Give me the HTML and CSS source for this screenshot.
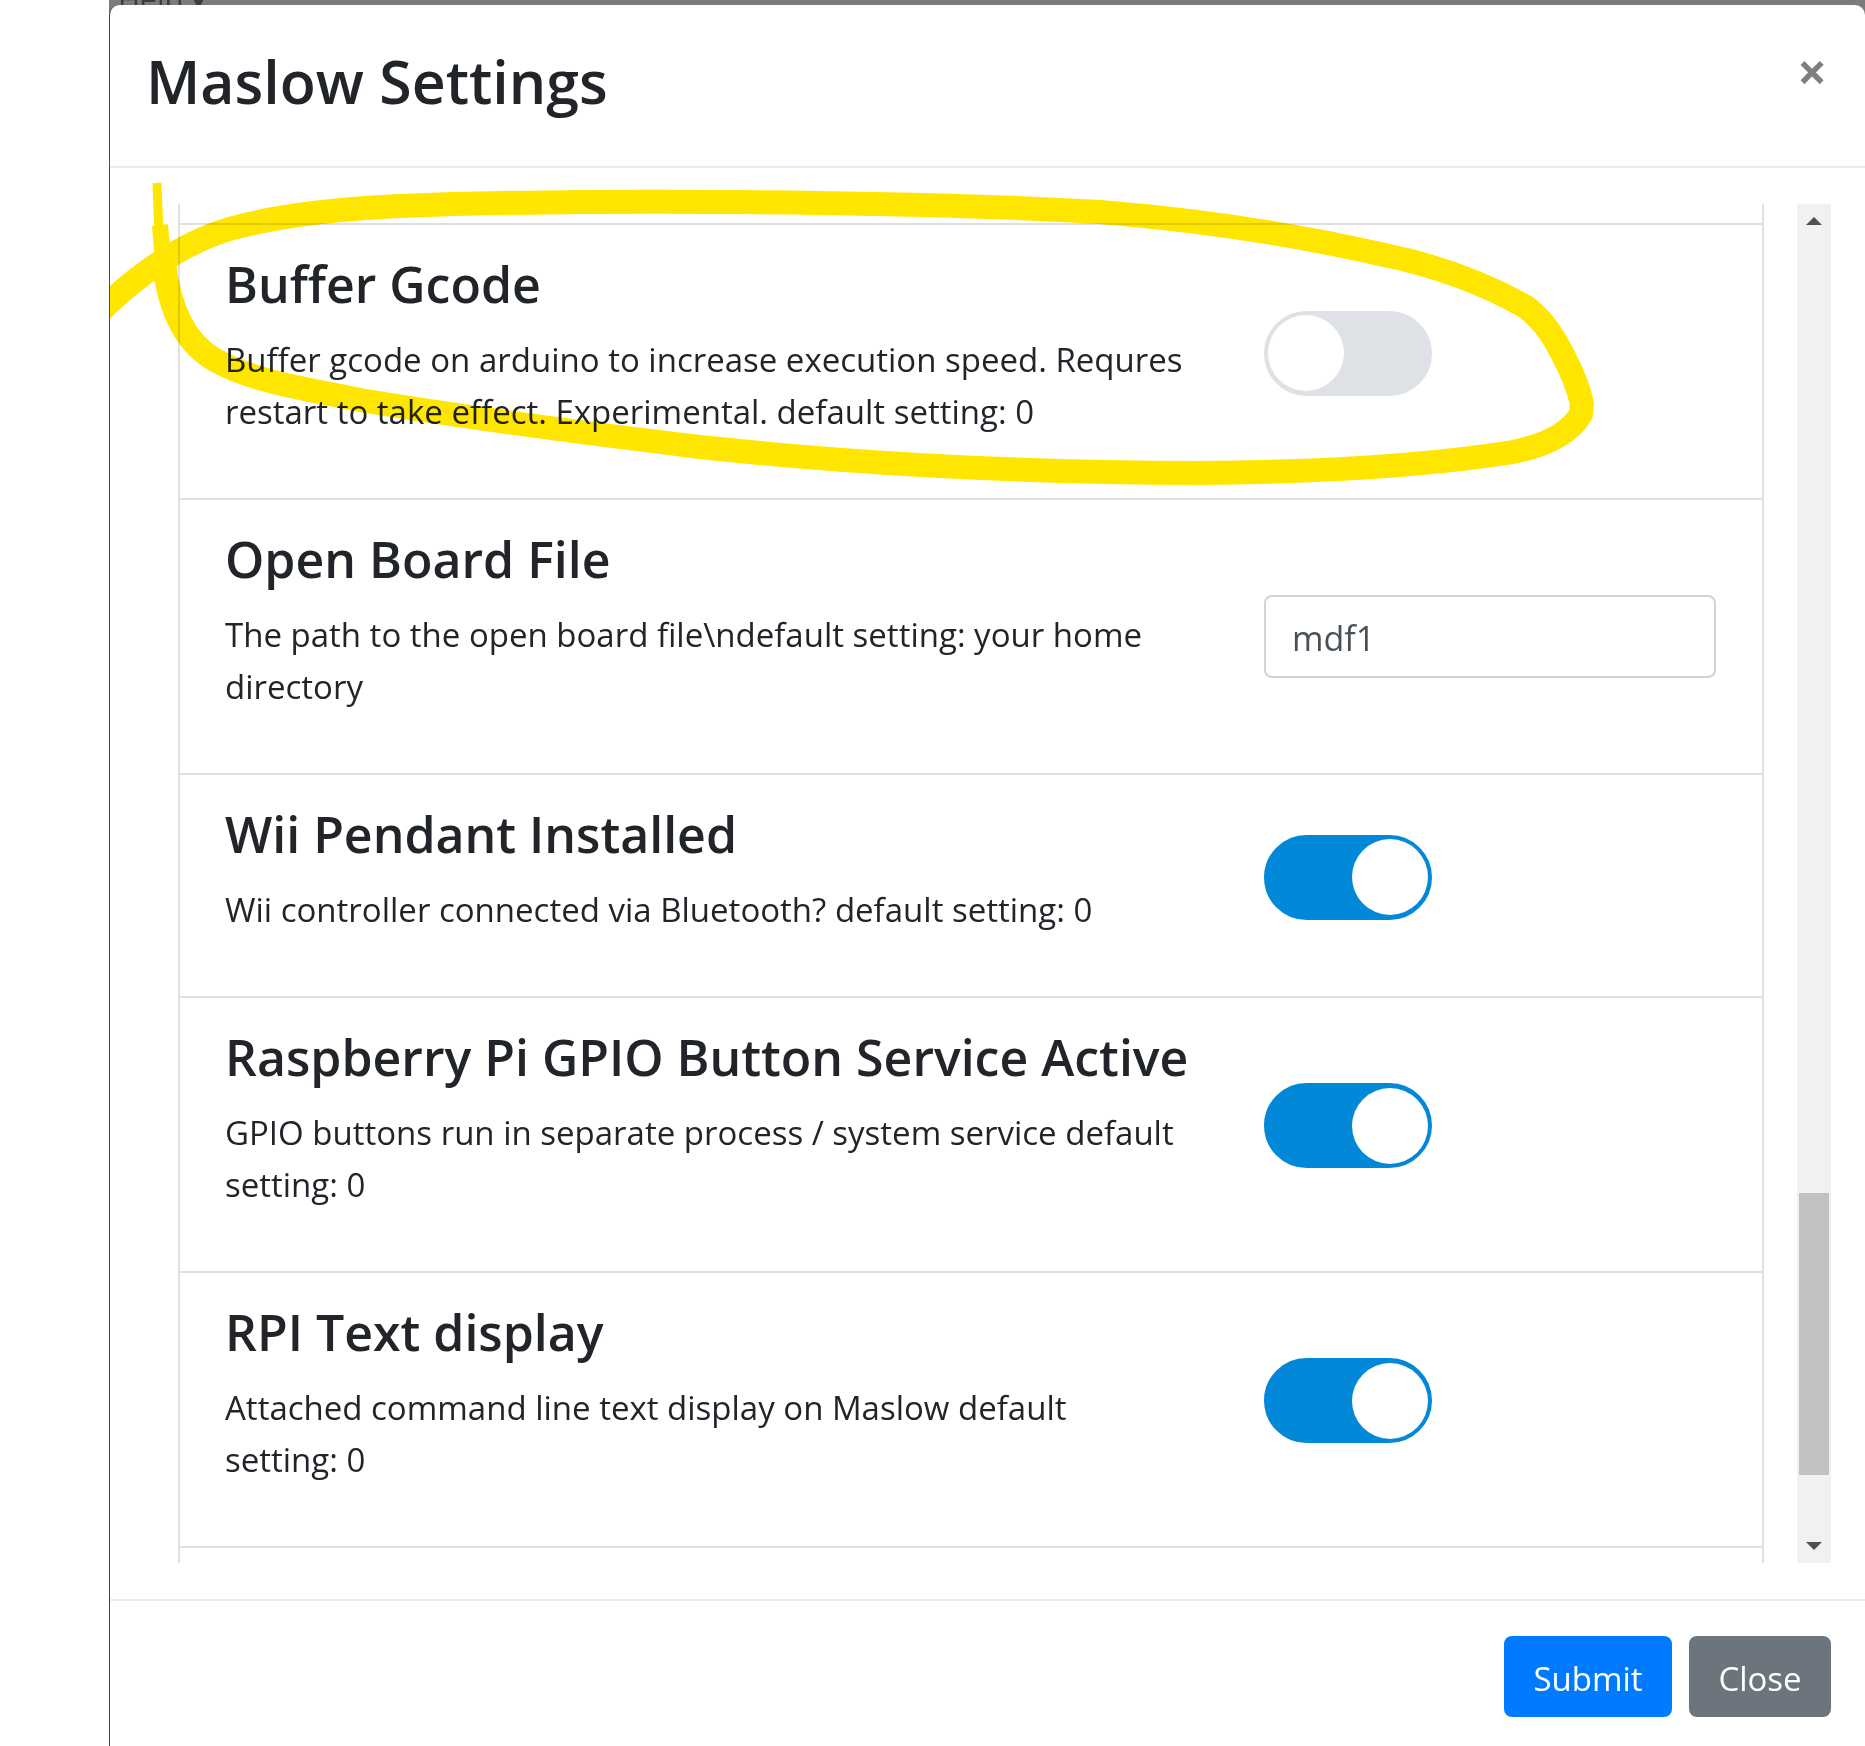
FILE: index.html
```html
<!DOCTYPE html>
<html lang="en">
<head>
<meta charset="utf-8">
<title>Maslow Settings</title>
<link rel="stylesheet" href="styles.css">
</head>
<body>
<div class="page-gap"></div>
<div class="backdrop">
  <div class="behind-nav"><span>Help &#9662;</span></div>
  <div class="modal">
    <div class="modal-header">
      <h3 class="modal-title">Maslow Settings</h3>
      <button class="close" type="button">&times;</button>
    </div>
    <div class="modal-body">
      <div class="scroll">
        <div class="scroll-content">
          <div class="list-tail"></div>
          <div class="setting">
            <div class="setting-text">
              <h4>Buffer Gcode</h4>
              <p>Buffer gcode on arduino to increase execution speed. Requres<br>restart to take effect. Experimental. default setting: 0</p>
            </div>
            <div class="setting-control">
              <div class="switch"><div class="knob"></div></div>
            </div>
          </div>
          <div class="setting">
            <div class="setting-text">
              <h4>Open Board File</h4>
              <p>The path to the open board file\ndefault setting: your home<br>directory</p>
            </div>
            <div class="setting-control">
              <input class="text-input" type="text" value="mdf1">
            </div>
          </div>
          <div class="setting">
            <div class="setting-text">
              <h4>Wii Pendant Installed</h4>
              <p>Wii controller connected via Bluetooth? default setting: 0</p>
            </div>
            <div class="setting-control">
              <div class="switch on"><div class="knob"></div></div>
            </div>
          </div>
          <div class="setting">
            <div class="setting-text">
              <h4>Raspberry Pi GPIO Button Service Active</h4>
              <p>GPIO buttons run in separate process / system service default<br>setting: 0</p>
            </div>
            <div class="setting-control">
              <div class="switch on"><div class="knob"></div></div>
            </div>
          </div>
          <div class="setting">
            <div class="setting-text">
              <h4>RPI Text display</h4>
              <p>Attached command line text display on Maslow default<br>setting: 0</p>
            </div>
            <div class="setting-control">
              <div class="switch on"><div class="knob"></div></div>
            </div>
          </div>
          <div class="list-more"></div>
        </div>
        <div class="scrollbar">
          <div class="sb-btn"><span class="arrow-up"></span></div>
          <div class="sb-track"><div class="sb-thumb" style="margin-top:955px;height:282px"></div></div>
          <div class="sb-btn"><span class="arrow-down"></span></div>
        </div>
      </div>
    </div>
    <div class="modal-footer">
      <button class="btn btn-primary" type="button">Submit</button>
      <button class="btn btn-secondary" type="button">Close</button>
    </div>
    <svg class="highlight" width="1755" height="1741" viewBox="110 5 1755 1741" xmlns="http://www.w3.org/2000/svg">
      <g fill="none" stroke="#ffe600" stroke-linejoin="round">
        <path d="M157,183 C158,215 159,240 162,262" stroke-width="9"/>
        <path d="M160,225 C162,250 163,262 165,280" stroke-width="16"/>
        <path d="M164,262 C168,300 180,340 215,360 C250,380 300,388 360,400 C450,415 560,430 700,447 C850,463 1000,472 1200,473 C1350,472 1450,462 1513,452 C1548,445 1570,433 1581,414 L1582,404 C1578,385 1570,368 1562,353 C1550,330 1540,318 1526,307 C1496,290 1450,268 1380,254 C1300,236 1200,220 1100,212 C950,203 700,200 500,203 C380,205 300,210 233,228 C190,240 150,265 110,302 L80,330" stroke-width="24"/>
      </g>
    </svg>
  </div>
</div>
</body>
</html>
```
FILE: styles.css
```css
* { box-sizing: border-box; }
html, body { margin: 0; padding: 0; }
body {
  width: 1865px;
  height: 1746px;
  overflow: hidden;
  background: #fff;
  font-family: "Open Sans", "Noto Sans", sans-serif;
  color: #212529;
  display: flex;
}
.page-gap { width: 109px; flex: none; }
.backdrop {
  flex: 1;
  background: #7b7b7b;
  display: flex;
  flex-direction: column;
  overflow: hidden;
}
.behind-nav {
  height: 5px;
  flex: none;
  overflow: hidden;
  padding-left: 9px;
  color: #3c3c3c;
  font-size: 30px;
  line-height: 1;
}
.behind-nav span { display: block; margin-top: -16px; }
.modal {
  flex: 1;
  position: relative;
  background: #fff;
  border-left: 1px solid #4a4a4a;
  border-radius: 10px 10px 0 0;
  overflow: hidden;
  display: flex;
  flex-direction: column;
}
.modal-header {
  display: flex;
  justify-content: space-between;
  align-items: flex-start;
  padding: 31px 33px 40px 36px;
  border-bottom: 2px solid #e9ecef;
}
.modal-title {
  margin: 0;
  font-size: 59px;
  line-height: 90px;
  font-weight: 600;
}
.close {
  width: 40px;
  margin-top: 9px;
  padding: 0;
  border: 0;
  background: none;
  font-family: inherit;
  font-size: 52px;
  line-height: 52px;
  font-weight: 700;
  color: rgba(0, 0, 0, .5);
  text-align: center;
}
.modal-body { padding: 36px 34px; }
.scroll { display: flex; height: 1359px; }
.scroll-content {
  flex: 1;
  overflow: hidden;
  padding: 0 33px 0 34px;
}
.list-tail {
  height: 21px;
  border: 2px solid #dfdfdf;
  border-top: 0;
}
.setting {
  border: 2px solid #dfdfdf;
  border-top: 0;
  padding: 28.6px 44px 29.5px 45px;
  display: grid;
  grid-template-columns: 975px 454px;
  column-gap: 64px;
  align-items: center;
}
.setting h4 {
  margin: 0 0 18.9px;
  font-size: 50px;
  line-height: 61.2px;
  font-weight: 600;
}
.setting p {
  margin: 0 0 30.8px;
  font-size: 33px;
  line-height: 52px;
  white-space: nowrap;
}
.list-more {
  height: 200px;
  border-left: 2px solid #dfdfdf;
  border-right: 2px solid #dfdfdf;
}
.switch {
  width: 168px;
  height: 85px;
  margin-bottom: 16px;
  border-radius: 43px;
  border: 2px solid #dee2e6;
  background: #dee2e6;
  padding: 0 2px;
  display: flex;
  align-items: center;
}
.switch .knob {
  width: 76px;
  height: 76px;
  border-radius: 50%;
  background: #fff;
}
.switch.on {
  background: #0288d9;
  border-color: #0288d9;
  justify-content: flex-end;
}
.text-input {
  display: block;
  width: 452px;
  height: 83px;
  border: 2px solid #ced4da;
  border-radius: 8px;
  padding: 4px 26px 0;
  font-family: inherit;
  font-size: 34px;
  color: #495057;
  background: #fff;
}
.scrollbar {
  width: 34px;
  flex: none;
  background: #f1f1f1;
  display: flex;
  flex-direction: column;
}
.sb-btn {
  height: 34px;
  flex: none;
  display: flex;
  align-items: center;
  justify-content: center;
}
.arrow-up {
  width: 0; height: 0;
  border-left: 8px solid transparent;
  border-right: 8px solid transparent;
  border-bottom: 8px solid #505050;
}
.arrow-down {
  width: 0; height: 0;
  border-left: 8px solid transparent;
  border-right: 8px solid transparent;
  border-top: 8px solid #505050;
}
.sb-track { flex: 1; padding: 0 2px; }
.sb-thumb { background: #c1c1c1; }
.modal-footer {
  border-top: 2px solid #e9ecef;
  padding: 35px 34px 0;
  display: flex;
  justify-content: flex-end;
  gap: 17px;
  flex: 1;
}
.btn {
  height: 81px;
  padding: 3px 0 0;
  border: 0;
  border-radius: 8px;
  color: #fff;
  font-family: inherit;
  font-size: 33px;
  line-height: 1;
}
.btn-primary { width: 168px; background: #007bff; }
.btn-secondary { width: 142px; background: #6c757d; }
.highlight {
  position: absolute;
  left: 0;
  top: 0;
  pointer-events: none;
  mix-blend-mode: multiply;
}
```
